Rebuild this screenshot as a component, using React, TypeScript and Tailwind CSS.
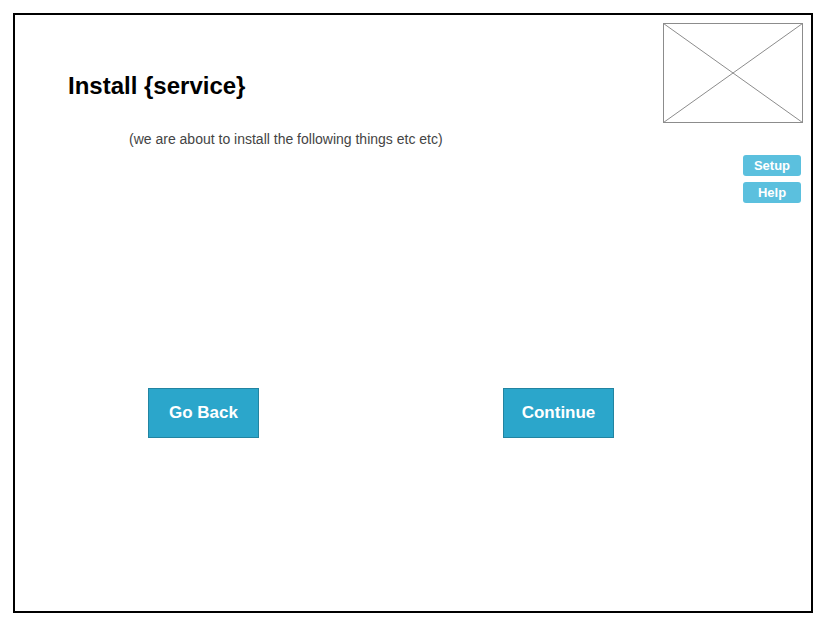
const Placeholder = () => (
  <svg width="140" height="100" viewBox="0 0 140 100" className="block">
    <rect x="0.5" y="0.5" width="139" height="99" fill="white" stroke="#8c8c8c" />
    <line x1="0.5" y1="0.5" x2="139.5" y2="99.5" stroke="#8c8c8c" />
    <line x1="139.5" y1="0.5" x2="0.5" y2="99.5" stroke="#8c8c8c" />
  </svg>
);

const App = () => {
  return (
    <div className="min-h-[625px] bg-white pl-[13px] pt-[13px] font-['Liberation_Sans',Arial,sans-serif]">
      <div className="flex h-[600px] w-[800px] flex-col border-2 border-black">
        <div className="flex justify-between">
          <div className="pl-[53px] pt-[57px]">
            <h1 className="text-[24px] font-bold leading-[28px] text-black">
              Install {"{service}"}
            </h1>
            <p className="ml-[61px] mt-[29px] text-[14px] leading-[20px] text-[#444]">
              (we are about to install the following things etc etc)
            </p>
          </div>

          <div className="flex flex-col items-end pr-[8px] pt-[8px]">
            <Placeholder />
            <div className="mr-[2px] mt-[32px] flex flex-col gap-[6px]">
              <button
                type="button"
                className="h-[21px] w-[58px] rounded-[3px] bg-[#5bc0de] text-[13px] font-bold leading-[21px] text-white"
              >
                Setup
              </button>
              <button
                type="button"
                className="h-[21px] w-[58px] rounded-[3px] bg-[#5bc0de] text-[13px] font-bold leading-[21px] text-white"
              >
                Help
              </button>
            </div>
          </div>
        </div>

        <div className="mt-[185px] flex gap-[244px] pl-[133px]">
          <button
            type="button"
            className="h-[50px] w-[111px] border border-[#2284a1] bg-[#2ba6cb] text-[17px] font-bold text-white"
          >
            Go Back
          </button>
          <button
            type="button"
            className="h-[50px] w-[111px] border border-[#2284a1] bg-[#2ba6cb] text-[17px] font-bold text-white"
          >
            Continue
          </button>
        </div>
      </div>
    </div>
  );
};

export default App;
